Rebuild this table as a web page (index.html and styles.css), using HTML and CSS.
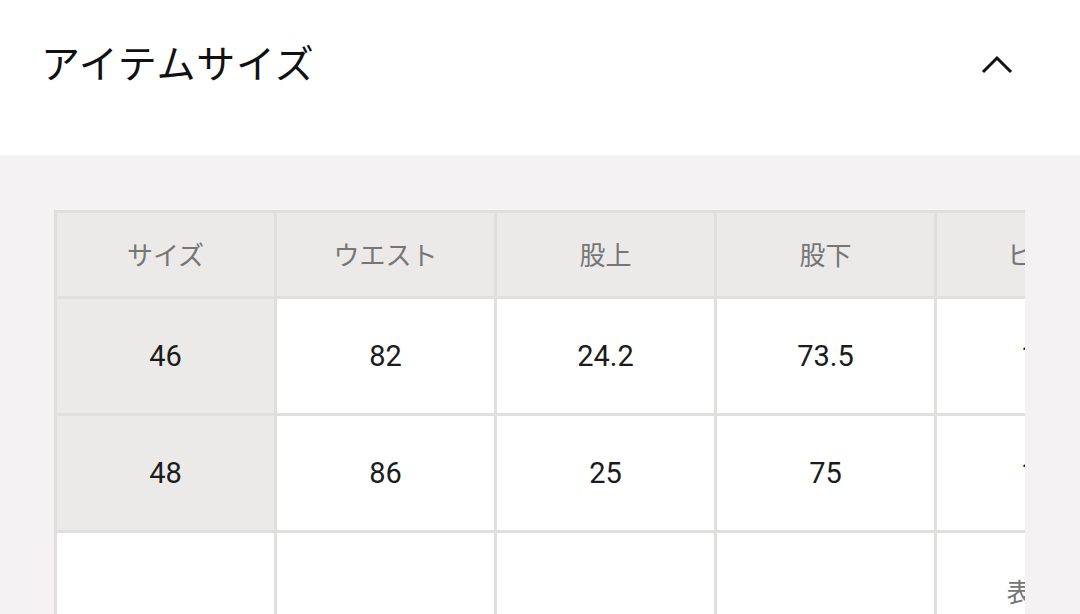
FILE: index.html
```html
<!DOCTYPE html>
<html lang="ja">
<head>
<meta charset="utf-8">
<link rel="stylesheet" href="styles.css">
</head>
<body>
<header class="head">
  <h2 class="title">アイテムサイズ</h2>
  <svg class="chev" width="34" height="22" viewBox="0 0 34 22"><path d="M3 19 L17 5 L31 19" fill="none" stroke="#111" stroke-width="3"/></svg>
</header>
<section class="panel">
  <div class="scroll">
    <table class="size">
      <colgroup><col class="c"><col class="c"><col class="c"><col class="c"><col class="c"><col class="c"></colgroup>
      <thead>
        <tr><th>サイズ</th><th>ウエスト</th><th>股上</th><th>股下</th><th>ヒップ</th><th>わたり</th></tr>
      </thead>
      <tbody>
        <tr><th>46</th><td>82</td><td>24.2</td><td>73.5</td><td>100</td><td>31</td></tr>
        <tr><th>48</th><td>86</td><td>25</td><td>75</td><td>104</td><td>32</td></tr>
        <tr><td></td><td></td><td></td><td></td><td class="note">表示無</td><td></td></tr>
      </tbody>
    </table>
  </div>
</section>
</body>
</html>
```
FILE: styles.css
```css
html, body { margin: 0; padding: 0; }
body {
  width: 1080px;
  height: 614px;
  overflow: hidden;
  background: #f4f2f2;
  font-family: "Noto Sans CJK JP", "Noto Sans", sans-serif;
}
.head {
  background: #fff;
  height: 155px;
  box-sizing: border-box;
  padding: 33px 66px 0 41px;
  display: flex;
  justify-content: space-between;
  align-items: flex-start;
}
.title {
  margin: 0;
  font-size: 39px;
  font-weight: 400;
  line-height: 56px;
  color: #111;
  letter-spacing: 0.8px;
}
.chev { margin-top: 20px; }
.panel {
  padding: 55px 0 0 54px;
}
.scroll {
  width: 971px;
  overflow: hidden;
}
.size {
  border-collapse: collapse;
  table-layout: fixed;
  width: 1323px;
}
.size .c { width: 220px; }
.size th, .size td {
  border: 3px solid #e1dfde;
  text-align: center;
  padding: 0;
  white-space: nowrap;
  overflow: hidden;
}
.size thead th {
  height: 81px;
  padding-bottom: 2px;
  background: #ebeae8;
  font-weight: 400;
  font-size: 26px;
  color: #767676;
}
.size tbody th, .size tbody td {
  height: 114px;
  font-family: "Roboto", "Noto Sans", sans-serif;
  font-size: 29px;
  font-weight: 400;
  color: #1b1b1b;
  background: #fff;
}
.size tbody th { background: #ebeae8; }
.size tbody tr:last-child td:first-child { background: #fff; }
.size td.note {
  font-family: "Noto Sans CJK JP", sans-serif;
  font-size: 26px;
  color: #767676;
  vertical-align: middle;
  padding-bottom: 6px;
}
```
